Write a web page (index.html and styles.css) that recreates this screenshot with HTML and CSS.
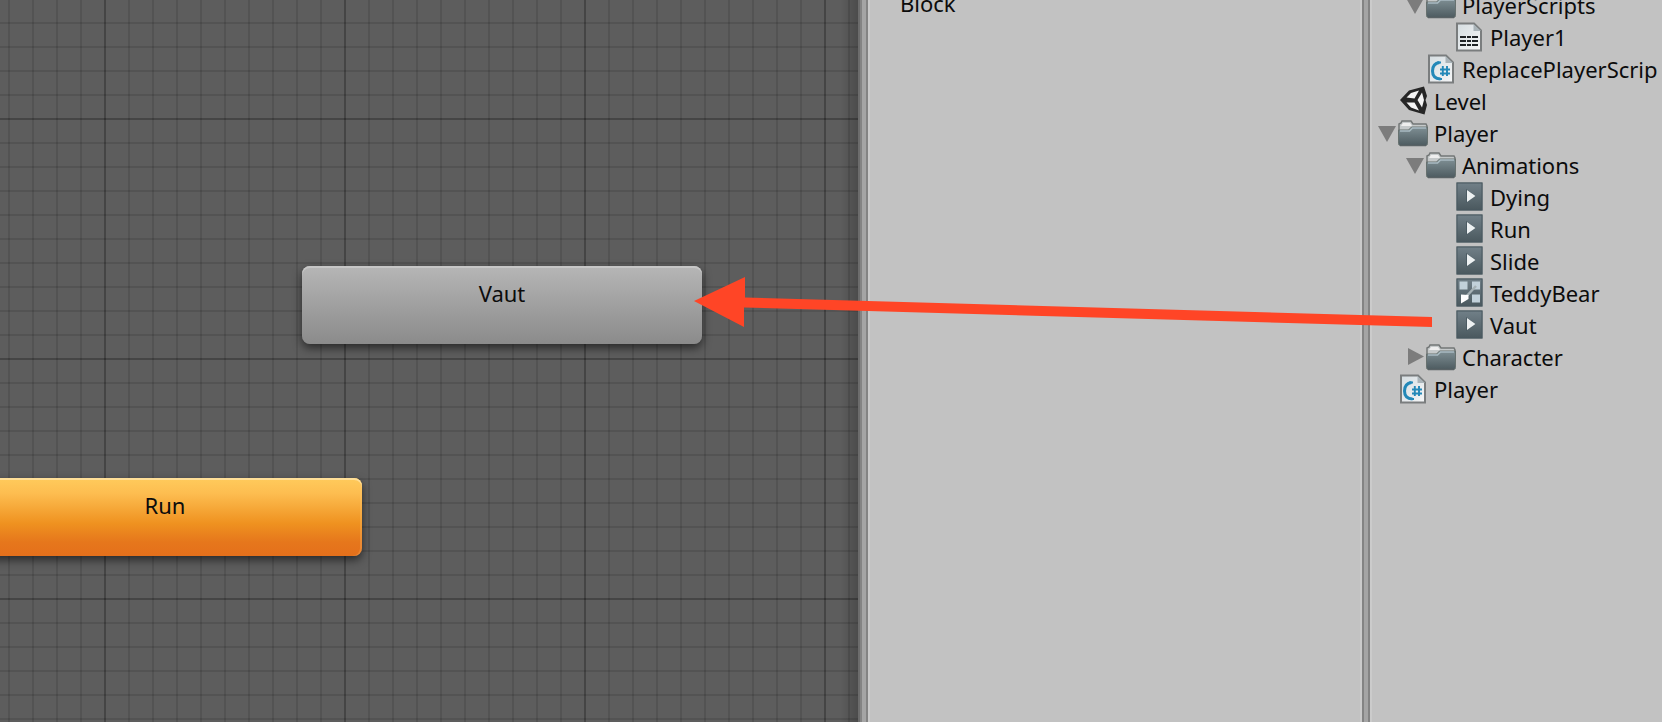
FILE: index.html
```html
<!DOCTYPE html>
<html lang="en">
<head>
<meta charset="utf-8">
<title>Animator</title>
<link rel="stylesheet" href="styles.css">
</head>
<body>
<svg class="defs" aria-hidden="true">
  <defs>
    <linearGradient id="slate" x1="0" y1="0" x2="0" y2="1"><stop offset="0" stop-color="#7f8f94"/><stop offset="1" stop-color="#4d5b60"/></linearGradient>
    <linearGradient id="clip" x1="0" y1="0" x2="0" y2="1"><stop offset="0" stop-color="#718088"/><stop offset="1" stop-color="#4a585e"/></linearGradient>
    <linearGradient id="paper" x1="0" y1="0" x2="1" y2="1"><stop offset="0" stop-color="#d5dde1"/><stop offset="1" stop-color="#f5f6f7"/></linearGradient>
  </defs>
  <symbol id="i-folder" viewBox="0 0 32 32">
    <path d="M2 10V6l2-1 1-2h9l2 3h13l1 2v6H2z" fill="#c5c9ca" stroke="#737777" stroke-width="1.5"/>
    <path d="M4 8l2-3h7l2 3z" fill="#eee"/>
    <path d="M1.500 12h10l3-3h16v16.500q0 2-2 2h-25q-2 0-2-2z" fill="url(#slate)" stroke="#67716f"/>
    <path d="M3 13h9.500l3-3H29" fill="none" stroke="#a9bbc2" stroke-width="1.500"/>
    <path d="M3 27.500h26" stroke="#596265" stroke-width="1.500"/>
  </symbol>
  <symbol id="i-page" viewBox="0 0 32 32">
    <path d="M4 1.500h17l7 7v20H4z" fill="url(#paper)" stroke="#7a7d7e" stroke-width="2"/>
    <path d="M20.500 2v7H28z" fill="#aab4b9"/>
  </symbol>
  <symbol id="i-text" viewBox="0 0 32 32">
    <use href="#i-page"/>
    <path d="M7 15h18M7 19h18M7 23h18" stroke="#1f2326" stroke-width="2" stroke-dasharray="6 1 4 1 7 1"/>
  </symbol>
  <symbol id="i-cs" viewBox="0 0 32 32">
    <use href="#i-page"/>
    <path d="M14.500 8.500q-7 1-7 8.500t8 8" fill="none" stroke="#2388b8" stroke-width="3"/>
    <path d="M12 8.500h4M14 25h3" stroke="#2388b8" stroke-width="2"/>
    <path d="M17.800 12v10M22 12v10M15 15.500h10M15 19.500h10" stroke="#2388b8" stroke-width="1.900"/>
  </symbol>
  <symbol id="i-scene" viewBox="0 0 32 32">
    <path d="M3 14L12 4.500 27 .500 30 10l-1.500 4L30 19l-2.500 9.500L12 24z" fill="#262626"/>
    <path d="M9.500 11.500L14 7l8-2.500-4.500 8zM9.500 16.500h8l4.500 8L14 21.500zM25 6.500l2 7.500-2 7.500-4.500-7.500z" fill="#f4f4f4"/>
  </symbol>
  <symbol id="i-clip" viewBox="0 0 32 32">
    <path d="M3 0h27v29H3z" fill="#8e9597"/>
    <path d="M4 1h25v27H4z" fill="url(#clip)"/>
    <path d="M4 1h25v27H4z" fill="none" stroke="#485860" stroke-width="1"/>
    <path d="M13 7v14l10-7z" fill="#4b5b63"/>
    <path d="M14 8v12l8.500-6z" fill="#edf1f2"/>
  </symbol>
  <symbol id="i-controller" viewBox="0 0 32 32">
    <path d="M3 0h27v29H3z" fill="#8e9597"/>
    <path d="M4 1h25v27H4z" fill="url(#clip)" stroke="#485860"/>
    <path d="M6.500 3.500h8v8h-8zM19 3.500h8v8h-8zM19 16.500h8v8h-8z" fill="#c2d1da"/>
    <path d="M10 22L23 8" stroke="#a6b1b5" stroke-width="2.500"/>
    <path d="M8 16.500v9l7.500-4.500v-4z" fill="#fff"/>
  </symbol>
  <symbol id="i-open" viewBox="0 0 20 32"><path d="M1 8h18l-9 16z" fill="#7c7c7c"/></symbol>
  <symbol id="i-closed" viewBox="0 0 20 32"><path d="M3 6v17l16-8.500z" fill="#7c7c7c"/></symbol>
</svg>

<main class="editor">
  <section class="graph" aria-label="Animator graph">
    <button class="node node-state" type="button">Vaut</button>
    <button class="node node-default" type="button">Run</button>
  </section>
  <div class="divider divider-graph"></div>
  <section class="hierarchy" aria-label="Hierarchy">
    <div class="label">Block</div>
  </section>
  <div class="divider"></div>
  <section class="project" aria-label="Project">
    <ul class="tree">
      <li class="row depth-1"><button class="fold" type="button" aria-label="Collapse PlayerScripts"><svg><use href="#i-open"/></svg></button><svg class="icon"><use href="#i-folder"/></svg><span class="name">PlayerScripts</span></li>
      <li class="row depth-2"><span class="fold"></span><svg class="icon"><use href="#i-text"/></svg><span class="name">Player1</span></li>
      <li class="row depth-1"><span class="fold"></span><svg class="icon"><use href="#i-cs"/></svg><span class="name">ReplacePlayerScrip</span></li>
      <li class="row"><span class="fold"></span><svg class="icon"><use href="#i-scene"/></svg><span class="name">Level</span></li>
      <li class="row"><button class="fold" type="button" aria-label="Collapse Player"><svg><use href="#i-open"/></svg></button><svg class="icon"><use href="#i-folder"/></svg><span class="name">Player</span></li>
      <li class="row depth-1"><button class="fold" type="button" aria-label="Collapse Animations"><svg><use href="#i-open"/></svg></button><svg class="icon"><use href="#i-folder"/></svg><span class="name">Animations</span></li>
      <li class="row depth-2"><span class="fold"></span><svg class="icon"><use href="#i-clip"/></svg><span class="name">Dying</span></li>
      <li class="row depth-2"><span class="fold"></span><svg class="icon"><use href="#i-clip"/></svg><span class="name">Run</span></li>
      <li class="row depth-2"><span class="fold"></span><svg class="icon"><use href="#i-clip"/></svg><span class="name">Slide</span></li>
      <li class="row depth-2"><span class="fold"></span><svg class="icon"><use href="#i-controller"/></svg><span class="name">TeddyBear</span></li>
      <li class="row depth-2"><span class="fold"></span><svg class="icon"><use href="#i-clip"/></svg><span class="name">Vaut</span></li>
      <li class="row depth-1"><button class="fold" type="button" aria-label="Expand Character"><svg><use href="#i-closed"/></svg></button><svg class="icon"><use href="#i-folder"/></svg><span class="name">Character</span></li>
      <li class="row"><span class="fold"></span><svg class="icon"><use href="#i-cs"/></svg><span class="name">Player</span></li>
    </ul>
  </section>
  <svg class="arrow" viewBox="0 0 738 50" aria-hidden="true"><path d="M0 24L51 0v20.500L738 40v10L50 30.500V50z" fill="#ff4526"/></svg>
</main>
</body>
</html>
```
FILE: styles.css
```css
* {
  box-sizing: border-box;
}

body {
  margin: 0;
  overflow: hidden;
  background: #c2c2c2;
  color: #0c0c0c;
  font: 22px/30px "Noto Sans", "Open Sans", sans-serif;
}

button {
  border: 0;
  padding: 0;
  background: none;
  color: inherit;
  font: inherit;
}

.defs {
  position: absolute;
  width: 0;
  height: 0;
}

.editor {
  position: relative;
  display: grid;
  grid-template-columns: minmax(0, 1fr) 10px 490px 12px 290px;
  height: 100vh;
  overflow: hidden;
}

/* Graph canvas: 24px cells, a stronger line every ten cells */
.graph {
  position: relative;
  overflow: hidden;
  background-color: #5d5d5d;
  background-image:
    linear-gradient(to left, #6c6c6c 2px, #00000030 2px, #00000000 20px),
    linear-gradient(to right, #0000002c 2px, transparent 2px),
    linear-gradient(#0000002c 2px, transparent 2px),
    linear-gradient(to right, #0000001c 2px, transparent 2px),
    linear-gradient(#0000001c 2px, transparent 2px);
  background-size: 100% 100%, 240px 240px, 240px 240px, 24px 24px, 24px 24px;
  background-position: 0 0, 104px 118px, 104px 118px, 8px 22px, 8px 22px;
}

.node {
  position: absolute;
  width: 400px;
  height: 78px;
  padding-bottom: 24px;
  border-radius: 8px;
}

.node-state {
  left: 302px;
  top: 266px;
  background: linear-gradient(#b6b6b6, #a0a0a0 50%, #8b8b8b);
  box-shadow: inset 0 2px #c6c6c6, 0 4px 10px #00000090;
}

.node-default {
  left: -32px;
  top: 478px;
  width: 394px;
  background: linear-gradient(#ffcb5c, #fdbd50 20%, #ef9220 58%, #e6771c 82%, #e4701b);
  box-shadow: inset 0 2px #ffdf98, inset -2px 0 #ffc97840, 0 4px 10px #00000090;
}

.divider {
  border: solid #cbcbcb;
  border-width: 0 2px;
  background: linear-gradient(to right, #848484 2px, #a5a5a5 2px 6px, #848484 6px);
}

.divider-graph {
  border-left: 0;
}

.hierarchy,
.project {
  overflow: hidden;
}

.label {
  margin-top: -12px;
  padding-left: 30px;
}

.tree {
  margin: -10px 0 0;
  padding: 0 0 0 5px;
  list-style: none;
}

.row {
  display: flex;
  height: 32px;
  white-space: nowrap;
}

.depth-1 {
  padding-left: 28px;
}

.depth-2 {
  padding-left: 56px;
}

.fold,
.fold svg {
  display: block;
  flex: none;
  width: 20px;
  height: 32px;
}

.icon {
  flex: none;
  width: 32px;
  height: 32px;
}

.name {
  padding-left: 5px;
}

/* Annotation drawn over the panels */
.arrow {
  position: absolute;
  right: 230px;
  top: 277px;
  width: 738px;
  height: 50px;
  pointer-events: none;
}
```
